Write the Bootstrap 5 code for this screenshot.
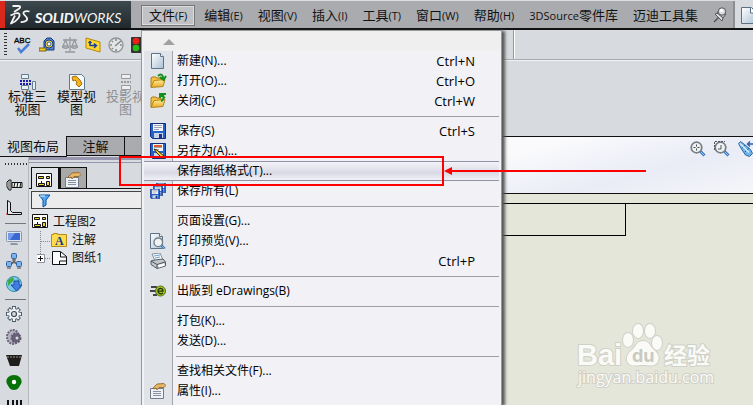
<!DOCTYPE html>
<html lang="zh-CN">
<head>
<meta charset="utf-8">
<meta name="viewport" content="width=device-width, initial-scale=1">
<title>SolidWorks</title>
<link rel="stylesheet" href="https://cdn.jsdelivr.net/npm/bootstrap@5.3.0/dist/css/bootstrap.min.css">
<style>
body{font-family:"Open Sans","Noto Sans CJK SC",sans-serif;font-size:12px;line-height:20px;color:#111;background:#e2e5e9;height:100vh}
svg{display:block;flex:none}
button{font:inherit;color:inherit;background:none;border:0;padding:0}
.topbar{height:30px;background:#aaabae;border-top:1px solid #d9dde1;border-bottom:2px solid #111}
.brand{width:131px;height:27px;background:linear-gradient(#3d494e,#20292e);border-left:5px solid #da291c;margin-right:10px}
.menus{gap:15px;font-size:13px;line-height:20px;padding-top:4px}
.menus small{font-size:11px}
.menus>li>button{white-space:nowrap;display:block}
.menus .file-btn{border:1px solid #777;outline:1px solid #dcdcde;outline-offset:-2px;background:#c0c2c5;padding:0 7px;margin-right:-6px;line-height:19px;height:21px}
.latin{font-size:11px}
.quick{background:#d7dbdf;border-left:2px solid #8b8d90;height:27px;padding-left:6px}
.popmenu{position:absolute;z-index:5;left:0;top:25px;width:361px;height:calc(100vh - 30px);background:#f1f1f6;border:1px solid #97989b;border-bottom:0;box-shadow:3px 1px 3px #555;padding:0 2px;font-size:12px;line-height:20px;overflow:hidden}
.scroll-up{height:20px;margin:0 -2px;padding:8px 0 0 21px;background:#efefef}
.entries{background:linear-gradient(90deg,#e0e3e8 28px,#a5a6aa 28px,#a5a6aa 29px,#f1f1f6 29px);min-height:100%}
.entry{display:flex;width:100%;height:20px;text-align:left;color:#000}
.entry .ico{width:33px;padding:2px 0 0 6px;flex:none}
.entry kbd{margin-left:auto;margin-right:24px;background:none;color:inherit;font:inherit;font-size:13px;padding:0}
.entry.active{border-top:1px solid #9092a6;border-bottom:1px solid #9092a6;background:linear-gradient(#f3f3f8,#d9dae6 60%,#f0f0f6);line-height:18px}
.rule{height:1px;background:#a0a0a0;margin:5px 0 4px 32px}
.toolrow{height:30px;background:#d7dbdf;border-bottom:1px solid #a7a9ac}
.tools{gap:7px;padding-left:4px}
.grip{width:3px;height:23px;background:repeating-linear-gradient(#333 0 1px,transparent 1px 3px)}
.rowend{width:240px;border-left:1px solid #97989b;box-shadow:inset 1px 0 #fff;height:29px}
.ribbon{height:76px;background:#d7dbdf;border-top:1px solid #f0f2f4;padding:13px 0 0 3px;font-size:13px;line-height:13px}
.ribbon button{width:49px;text-align:center;white-space:nowrap}
.ribbon button:disabled{color:#8d9094}
.ribbon svg{margin:0 auto}
.sheet-tabs{height:21px;background:#d7dbdf;font-size:13px;line-height:17px}
.sheet-tabs button{border:1px solid #111;border-left:0;background:#a9abae;width:58px;height:20px}
.sheet-tabs .current{width:67px;background:#d7dbdf;border:0;border-right:1px solid #111;border-bottom:1px solid #111;height:21px}
.leftzone{width:480px}
.rail{width:29px;background:#d7dbdf;border-right:1px solid #b6b8bb;padding:6px 0 0 5px;flex:none}
.rail .dots{width:22px;height:2px;background:repeating-linear-gradient(90deg,#333 0 1px,transparent 1px 3px);margin-bottom:10px}
.rail button{display:block;height:23px;width:18px;padding:0 0 0 1px}
.rail button svg{margin-top:-3px}
.rail hr{width:21px;margin:2px 0 4px;border-top:1px solid #777;opacity:1}
.tree-top{height:10px;border-top:3px solid #9895ae;background:linear-gradient(#d7dbdf 2px,#9895ae 2px,#9895ae 3px,#d7dbdf 3px)}
.ptabs{background:#d7dbdf;border-bottom:1px solid #111;height:22px;padding-left:2px}
.ptabs button{width:28px;height:22px;border:1px solid #111;border-bottom:0;padding:3px 0 0 4px;background:#dfe2e6}
.ptabs button+button{background:#a9a9a9;border-left:2px solid #111;height:21px}
.filterbox{height:18px;border:1px solid #444;background:#ececec;margin:2px 0 4px 2px}
.filterbox input{border:0;background:none;width:200px;outline:0}
.tree{line-height:18px;margin:0;padding:0 0 0 3px;list-style:none}
.tree ul{list-style:none;margin:0;padding:0 0 0 5px}
.tree .node{display:flex;height:18px;gap:5px}
.view{flex:1;min-width:0;border-top:1px solid #111}
.hud{height:57px;background:linear-gradient(165deg,#fafafc 20%,#e9ecf6 62%,#f6f6f9);border-bottom:1px solid #111;padding:4px 0 0 0;overflow:hidden}
.canvas{background:#e5e6da;padding-top:9px}
.frame{border-top:1px solid #000}
.title-cell{height:32px;border-right:1px solid #000;border-bottom:1px solid #000;width:calc(100% - 127px)}
.watermark{position:absolute;right:36px;bottom:10px}
.mark-text{fill:#fafaf7;stroke:#cfd0c7;stroke-width:2px;paint-order:stroke}
.callout{position:absolute;z-index:10;left:119px;top:156px;width:325px;height:30px;border:2px solid #fe0000;pointer-events:none}
.pointer-line{position:absolute;z-index:10;left:444px;top:165px;pointer-events:none}
</style>
<script src="https://cdn.jsdelivr.net/npm/bootstrap@5.3.0/dist/js/bootstrap.bundle.min.js"></script>
</head>
<body class="d-flex flex-column overflow-hidden position-relative">
<svg width="0" height="0" class="position-absolute">
<defs>
<linearGradient id="gfold" x2="0" y2="1"><stop stop-color="#fff0a0"/><stop offset="1" stop-color="#e9a820"/></linearGradient>
<linearGradient id="gdoc" x2="1" y2="1"><stop stop-color="#fff"/><stop offset="1" stop-color="#a9bfd2"/></linearGradient>
<symbol id="doc" viewBox="0 0 16 16"><path d="M1.500.5h9l3 3v12h-12z" fill="url(#gdoc)" stroke="#5e7486"/><path d="M10.500.5v3h3" fill="#fff" stroke="#5e7486"/></symbol>
<symbol id="folder" viewBox="0 0 16 16"><path d="M1 14V5l1-1h4l1 1h4v3z" fill="#f2c14a" stroke="#a87a18"/><path d="M1 14.500l3-7 11-1-2 7z" fill="url(#gfold)" stroke="#b88418"/></symbol>
<symbol id="floppy" viewBox="0 0 16 16"><path d="M.5.5h15v15h-13l-2-2z" fill="#2262ca" stroke="#122c80"/><path d="M3 1h10v7H3z" fill="#f3f5f8"/><path d="M4 2.500h8M4 4.500h8M4 6.500h5" stroke="#a0a4b0"/><path d="M4 10h9v5H4z" fill="#c8d4e6"/><path d="M9 11h3v4H9z" fill="#17338f"/></symbol>
<symbol id="drawing" viewBox="0 0 16 16"><path d="M.5 1.500h15v13H.5z" fill="#fff" stroke="#111"/><path d="M2.500 4.500h5v2h-5zM10.500 4.500h3v2h-3zM5.500 9v2.500h3v2h-6v-2h3M10.500 9.500h3v4h-3z" fill="#f5d328" stroke="#111"/></symbol>
<symbol id="hand" viewBox="0 0 16 16"><path d="M.5 5.500h13v10H.5z" fill="#edf0f4" stroke="#737a88"/><path d="M3 8.500h8M3 10.500h8M3 12.500h8" stroke="#8890a2"/><path d="M3 5l4-4 7-.5 2 2-2 2H9L7 7 6 5 4 6z" fill="#e5b568" stroke="#8b5b22" stroke-width=".8"/></symbol>
<symbol id="lens" viewBox="0 0 16 16"><path d="M10 10l4.500 4.500" stroke="#3d79bd" stroke-width="3"/><path d="M10.500 10.500l4 4" stroke="#8dcaf5"/><circle cx="6.500" cy="6.500" r="5.300" fill="#eef3f5" stroke="#777e85" stroke-width="1.700"/></symbol>
<symbol id="gear" viewBox="0 0 16 16"><path d="M8 0v16M0 8h16M2.500 2.500l11 11M2.500 13.500l11-11" stroke="#4c5b68" stroke-width="4"/><path d="M8 1v14M1 8h14M3.200 3.200l9.600 9.600M3.200 12.800l9.600-9.600" stroke="#eff3f5" stroke-width="2.300"/><circle cx="8" cy="8" r="5" fill="#eff2f4"/><circle cx="8" cy="8" r="2.500" fill="#d7dbdf" stroke="#3e4b58" stroke-width="1.200"/></symbol>
</defs></svg>

<header class="topbar d-flex flex-shrink-0">
<div class="brand flex-shrink-0">
<svg width="126" height="27" viewBox="5 1 126 27" role="img" aria-label="SOLIDWORKS"><g fill="none" stroke="#f4f4f4" stroke-width="1.800" stroke-linejoin="round"><path d="M12.500 6h6c2.500 0 2 1.700.5 2.800l-5 3.200"/><path d="M10.500 15.500l4.500-2c5-1.500 5.500 1.500 3.500 4.500-2 2.800-4.500 4.500-7.500 5.500l4-8"/><path d="M29.500 11.500c-4-1.200-7 .3-5.800 2.500l3 3.500c1.500 2.500-1 4.800-6 4.500"/></g><text x="35" y="23" fill="#f4f4f4" font-family="Lato" font-style="italic" font-size="14" font-weight="900">SOLID<tspan font-weight="400">WORKS</tspan></text></svg>
</div>
<ul class="menus list-unstyled d-flex m-0 flex-grow-1">
<li class="position-relative"><button class="file-btn" aria-expanded="true">文件<small>(F)</small></button>
<div class="popmenu">
<div class="scroll-up"><svg width="12" height="6"><path d="M0 6l6-6 6 6z" fill="#a0a0a0"/></svg></div>
<div class="entries">
<button class="entry"><span class="ico"><svg width="16" height="16"><use href="#doc"/></svg></span>新建(N)...<kbd>Ctrl+N</kbd></button>
<button class="entry"><span class="ico"><svg width="17" height="16"><use href="#folder" width="16"/><path d="M8 3c3-3 5-1 5 2M10 4l3.500 3L16 3" fill="none" stroke="#168f1c" stroke-width="2"/></svg></span>打开(O)...<kbd>Ctrl+O</kbd></button>
<button class="entry"><span class="ico"><svg width="17" height="16"><use href="#folder" width="16"/><path d="M11 8c3-1 3-4 2-6M10 5V1h6M10.500 1.500L15 5" fill="none" stroke="#168f1c" stroke-width="2"/></svg></span>关闭(C)<kbd>Ctrl+W</kbd></button>
<div class="rule"></div>
<button class="entry"><span class="ico"><svg width="16" height="16"><use href="#floppy"/></svg></span>保存(S)<kbd>Ctrl+S</kbd></button>
<button class="entry"><span class="ico"><svg width="16" height="16"><use href="#floppy"/><path d="M4 3h8" stroke="#e25b24" stroke-width="2"/><path d="M4 6l3 1 8 7-2 2-7-7z" fill="#f6cb31" stroke="#38300d"/></svg></span>另存为(A)...</button>
<button class="entry active"><span class="ico"></span>保存图纸格式(T)...</button>
<button class="entry"><span class="ico"><svg width="16" height="16"><use href="#floppy" x="6" width="10" height="10"/><use href="#floppy" x="3" y="3" width="10" height="10"/><use href="#floppy" y="6" width="10" height="10"/></svg></span>保存所有(L)</button>
<div class="rule"></div>
<button class="entry"><span class="ico"></span>页面设置(G)...</button>
<button class="entry"><span class="ico"><svg width="16" height="16"><use href="#doc" x="-1"/><use href="#lens" x="3" y="4" width="13" height="13"/></svg></span>打印预览(V)...</button>
<button class="entry"><span class="ico"><svg width="16" height="16"><path d="M2 1l8-1 3 7-8 1z" fill="#f8fafb" stroke="#87919b"/><path d="M4 3l6-1M5 5l5-1" stroke="#72a0d0"/><path d="M1 8l4-1 8-1 2.500 3v4L7 15.500l-6-4z" fill="#c3c7cb" stroke="#555d64"/><path d="M1 8l6 3.500L15 9M7 12v3" fill="none" stroke="#4c5258"/><path d="M8 12l6-1.500 1 2-6 2z" fill="#fff"/></svg></span>打印(P)...<kbd>Ctrl+P</kbd></button>
<div class="rule"></div>
<button class="entry"><span class="ico"><svg width="16" height="16"><path d="M1 4h6M0 8h5M3 12h4" stroke="#111" stroke-width="1.300"/><circle cx="10.500" cy="8" r="5" fill="#a7c825" stroke="#526c12"/><path d="M8 8.200h5c0-3.700-5-3.700-5-.2 0 3 3 3.500 5 2" fill="none" stroke="#1d3507" stroke-width="1.300"/></svg></span>出版到 eDrawings(B)</button>
<div class="rule"></div>
<button class="entry"><span class="ico"></span>打包(K)...</button>
<button class="entry"><span class="ico"></span>发送(D)...</button>
<div class="rule"></div>
<button class="entry"><span class="ico"></span>查找相关文件(F)...</button>
<button class="entry"><span class="ico"><svg width="16" height="16"><use href="#hand"/></svg></span>属性(I)...</button>
</div>
</div>
</li>
<li><button>编辑<small>(E)</small></button></li>
<li><button>视图<small>(V)</small></button></li>
<li><button>插入<small>(I)</small></button></li>
<li><button>工具<small>(T)</small></button></li>
<li><button>窗口<small>(W)</small></button></li>
<li><button>帮助<small>(H)</small></button></li>
<li><button><span class="latin">3DSource</span>零件库</button></li>
<li><button>迈迪工具集</button></li>
<li><button aria-label="固定菜单"><svg width="14" height="20"><path d="M1 17l5-5" stroke="#555" stroke-width="1.500"/><path d="M2 9l7 7 1-3-5-5z" fill="#e0e0e5" stroke="#555"/><path d="M4 8l3-4 6 5-3 4z" fill="#b6b6be" stroke="#5b5b63"/><circle cx="9" cy="6.500" r="3.700" fill="#dcdce1" stroke="#55555d"/><circle cx="8.500" cy="5.500" r="1.700" fill="#fff"/></svg></button></li>
</ul>
<div class="quick flex-shrink-0 d-flex align-items-center"><button aria-label="新建" class="overflow-hidden"><svg width="12" height="18"><path d="M.5 1.500h10l6 6v10H.5z" fill="url(#gdoc)" stroke="#5a7084"/><path d="M9.500 1v6h4" fill="#fff" stroke="#5a7084"/></svg></button></div>
</header>

<div class="toolrow d-flex flex-shrink-0">
<div class="tools d-flex flex-grow-1 align-items-center">
<span class="grip"></span>
<button aria-label="拼写检验"><svg width="18" height="20"><text x="0" y="8" font-family="Liberation Sans" font-size="8" fill="#000" stroke="#000" stroke-width=".3">ABC</text><path d="M4 13l3 4 8-8" fill="none" stroke="#4b7ed8" stroke-width="2.500"/></svg></button>
<button aria-label="测量"><svg width="16" height="16"><path d="M5 12V4l3-3h4l3 3v9H6z" fill="#4a88d7" stroke="#1a3974"/><circle cx="10" cy="7" r="4" fill="#f7d84b" stroke="#193b78"/><circle cx="10" cy="7" r="2" fill="#fff" stroke="#36588c"/><path d="M0 11h7v3H0z" fill="#f4cb24" stroke="#765f12"/></svg></button>
<button aria-label="质量属性"><svg width="16" height="16" fill="none" stroke="#96999c" stroke-width="1.300"><path d="M8 0v14M3 15h10M1 3h14M3.500 3L1 9h5zM12.500 3L10 9h5z"/><path d="M0 9c1 3 6 3 7 0M9 9c1 3 6 3 7 0"/></svg></button>
<button aria-label="剖面属性"><svg width="16" height="16"><path d="M1 1l14 4v10L1 11z" fill="#ffd82e" stroke="#b6860c"/><path d="M5 9V5M3.500 6L5 4.500 6.500 6M5 8.500h6M9 6.500l2.500 2L9 11" fill="none" stroke="#183d9c" stroke-width="1.400"/></svg></button>
<button aria-label="性能评估"><svg width="16" height="16"><circle cx="8" cy="8" r="7" fill="#e4e5e7" stroke="#929496" stroke-width="1.300"/><path d="M7 9l6-5M2 8h2M8 2v2M12 8h2M8 12v2M4 4l1 1M4 12l1-1" stroke="#85888b" stroke-width="1.600"/></svg></button>
<button aria-label="检查"><svg width="10" height="16"><rect width="14" height="16" rx="1" fill="#333"/><circle cx="5" cy="4" r="3.300" fill="#ef2015"/><circle cx="5" cy="11" r="3.300" fill="#29bd19"/></svg></button>
</div><div class="rowend"></div>
</div>
<div class="ribbon d-flex flex-shrink-0 align-items-start">
<button><svg width="16" height="16"><path d="M1.500.5h7v4h-7zM1.500 11.500h7v4h-7zM12.500 7.500h3v8h-3z" fill="#e9f0f4" stroke="#637c91"/><path d="M0 7h11M0 10h11" stroke="#1a1aac" stroke-width="2" stroke-dasharray="2 1"/></svg>标准三<br>视图</button>
<button><svg width="16" height="16"><path d="M.5.5h12l3 3v12H.5z" fill="#f7fafb" stroke="#5c7a91"/><path d="M3 3l4-1 4 4 2 4-3 3-3-3 1-2-2-2-2 1z" fill="#f1b51d" stroke="#a76c0b"/></svg>模型视<br>图</button>
<button disabled><svg width="16" height="16"><path d="M3.500.5h9v4h-9zM3.500 11.500h9v4h-9z" fill="#eee" stroke="#999"/><path d="M3 8h10" stroke="#999" stroke-width="2" stroke-dasharray="2 1"/></svg>投影视<br>图</button>
</div>

<main class="d-flex flex-grow-1 overflow-hidden">
<div class="leftzone d-flex flex-column flex-shrink-0">
<div class="sheet-tabs d-flex flex-shrink-0"><button class="current">视图布局</button><button>注解</button><button>草图</button></div>
<div class="d-flex flex-grow-1 overflow-hidden">
<nav class="rail">
<div class="dots"></div>
<button aria-label="扣件"><svg width="17" height="16"><path d="M6 5.500h10v5H6z" fill="#eee" stroke="#111"/><path d="M9 5l-1 5M12 5l-1 5M15 5l-1 5" stroke="#111"/><path d="M1 5l2-2h2v10H3l-2-3z" fill="#fff" stroke="#111"/><path d="M3 3v9" stroke="#333"/></svg></button>
<button aria-label="型材"><svg width="17" height="16"><path d="M1.500.5l3 2v8l2 2h9v2H1.500z" fill="#e4e6ea" stroke="#111"/><path d="M0 14h2" stroke="#f00"/></svg></button>
<hr>
<button aria-label="显示"><svg width="16" height="16"><rect x=".5" y="1.500" width="15" height="10" rx="1" fill="#dfe6ef" stroke="#8c98aa"/><rect x="2" y="3" width="12" height="7" fill="#3968cf"/><path d="M2 3h7L4 10H2z" fill="#739bea"/><path d="M5 13h6l1 2H4z" fill="#8b96a6"/></svg></button>
<button aria-label="网络"><svg width="16" height="16"><path d="M8 4v5M3 12l5-3 5 3" fill="none" stroke="#666" stroke-width="2"/><rect x="5.500" y=".5" width="5" height="5" rx="1" fill="#7db4ee" stroke="#32649e"/><rect x=".5" y="8.500" width="5" height="5" rx="1" fill="#7db4ee" stroke="#32649e"/><rect x="10.500" y="8.500" width="5" height="5" rx="1" fill="#7db4ee" stroke="#32649e"/><path d="M6 7h4M1 15h4M11 15h4" stroke="#777" stroke-width="1.500"/></svg></button>
<button aria-label="下载"><svg width="17" height="16"><circle cx="8" cy="8" r="7.500" fill="#7dc9ef" stroke="#3987a8"/><path d="M2 4l5-3 1 3-3 3-3 3zM11 2l3 3-2 2z" fill="#3eac45"/><path d="M8 5h5v4h3l-5.500 6L5 9h3z" fill="#407de5" stroke="#244ea5"/></svg></button>
<hr>
<button aria-label="齿轮"><svg width="16" height="16"><use href="#gear"/></svg></button>
<button aria-label="齿轮组"><svg width="16" height="16"><ellipse cx="7" cy="8" rx="6" ry="7" fill="#b4b2c0" stroke="#676378" stroke-width="2" stroke-dasharray="2 1"/><circle cx="10" cy="9" r="4.500" fill="#696078" stroke="#615c74" stroke-width="2" stroke-dasharray="2 1"/><circle cx="11" cy="9" r="1.500" fill="#d7dbdf"/></svg></button>
<button aria-label="带轮"><svg width="16" height="16"><path d="M0 3h16l-3 11H4z" fill="#1e1d1c"/><path d="M1 5h14" stroke="#969787" stroke-dasharray="2 1"/></svg></button>
<button aria-label="凸轮"><svg width="16" height="16"><path d="M8 0c6 0 9 5 7 9-2 3-3 6-7 6s-5-3-7-6C-1 5 2 0 8 0z" fill="#087208"/><circle cx="8" cy="7" r="2.200" fill="#fff"/></svg></button>
<button aria-label="弹簧"><svg width="16" height="16"><path d="M2 2v14M7 2v14M11 2v14M15 2v14" stroke="#111" stroke-width="2"/></svg></button>
</nav>
<section class="flex-grow-1">
<div class="tree-top"></div>
<div class="ptabs d-flex"><button aria-label="设计树"><svg width="16" height="16"><use href="#drawing"/></svg></button><button aria-label="属性"><svg width="16" height="16"><use href="#hand"/></svg></button></div>
<div class="filterbox d-flex"><label for="filter" aria-label="过滤"><svg width="22" height="16"><path d="M7 3h11l-4 5v5l-3 2V8z" fill="#55a7f0" stroke="#0750a9"/><path d="M8 4h5" stroke="#dcf4ff"/></svg></label><input id="filter" type="text"></div>
<ul class="tree"><li><div class="node"><svg width="16" height="16"><use href="#drawing"/></svg>工程图2</div>
<ul><li class="node gap-0"><svg width="14" height="18"><path d="M3.500 0v18M4 10.500h10" stroke="#888" stroke-dasharray="1 1"/></svg><svg width="17" height="18"><path d="M.5 15.500V3.500h2v-1h4v1h9v12z" fill="#ffdc4d" stroke="#b48a18"/><text x="4" y="14" font-family="Liberation Serif" font-weight="700" font-size="12" fill="#123b93">A</text></svg><span class="ps-1">注解</span></li>
<li class="node gap-0"><svg width="14" height="18"><path d="M3.500 0v5M8 9.500h6" stroke="#888" stroke-dasharray="1 1"/><path d="M-.5 5.500h8v8h-8z" fill="#fff" stroke="#8b929c"/><path d="M1 9.500h5M3.500 7v5" stroke="#111"/></svg><svg width="17" height="18"><path d="M1.500 2.500h8l6 5v8H1.500z" fill="#fafbfc" stroke="#111"/><path d="M9.500 3v5h6M8.500 15v-3h7" fill="none" stroke="#111"/></svg><span class="ps-1">图纸1</span></li></ul></li></ul>
</section>
</div>
</div>
<section class="view d-flex flex-column">
<div class="hud d-flex justify-content-end gap-2 flex-shrink-0">
<button aria-label="整屏显示全图" class="align-self-start"><svg width="16" height="16"><use href="#lens"/><path d="M6.500 3.500v2M6.500 7.500v2M3.500 6.500h2M7.500 6.500h2" stroke="#444"/></svg></button>
<button aria-label="局部放大" class="align-self-start"><svg width="16" height="16"><use href="#lens"/><path d="M.5 9V.5H11" fill="none" stroke="#555" stroke-dasharray="2 1"/><path d="M7 4v4H4" fill="none" stroke="#555"/></svg></button>
<button aria-label="上一视图" class="align-self-start"><svg width="15" height="16"><path d="M.5 2.500l2-2 4 3 6 5 2 4-3 3-4-1.500-4-6z" fill="#6fb2ea" stroke="#34699b"/><path d="M4 7l3-3M7 11l4-4" stroke="#28609c"/><path d="M2 2.500l9 9" stroke="#d7effd" stroke-width="1.500"/><path d="M15 3H9.500M12 .5L9.500 3 12 5.500" fill="none" stroke="#315da8" stroke-width="1.400"/></svg></button>
</div>
<div class="canvas flex-grow-1 position-relative">
<div class="frame"><div class="title-cell"></div></div>
<svg class="watermark" width="142" height="76" viewBox="575 320 142 76" role="img" aria-label="Baidu 经验">
<g class="mark-text" font-family="Liberation Sans" font-weight="700"><text x="577" y="366" font-size="29">Bai</text><ellipse cx="628" cy="341" rx="5" ry="7"/><ellipse cx="638" cy="332" rx="5" ry="7"/><ellipse cx="650" cy="332" rx="5" ry="7"/><ellipse cx="657" cy="344" rx="5" ry="7"/><path d="M643 342c6 0 7 5 11 9 5 4 6 9 3 13-4 4-9 2-14 2s-12 2-15-2c-3-5 0-10 4-13 4-4 5-9 11-9z"/><text x="664" y="365" font-size="23" font-family="Noto Sans CJK SC">经验</text></g>
<text x="632" y="363" font-family="Inter" font-weight="700" font-size="18" fill="#c9cac0">du</text>
<text class="mark-text" x="578" y="384" font-family="Open Sans" font-size="16">jingyan.baidu.com</text></svg>
</div>
</section>
</main>
<div class="callout"></div>
<svg class="pointer-line" width="203" height="12"><path d="M4 6h198" stroke="#fe0000" stroke-width="2"/><path d="M0 6l8-4v8z" fill="#fe0000"/></svg>
</body>
</html>
